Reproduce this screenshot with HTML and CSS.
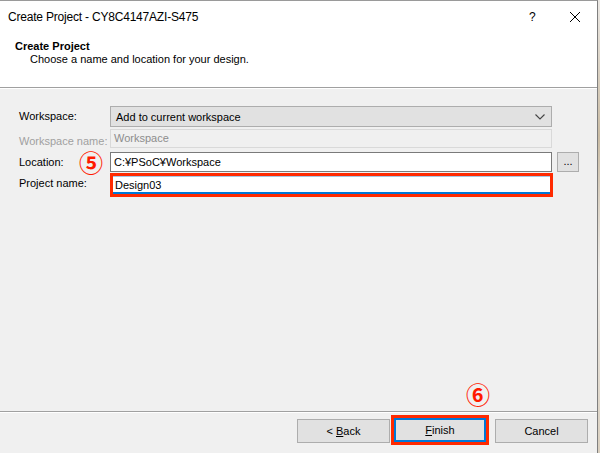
FILE: index.html
```html
<!DOCTYPE html>
<html>
<head>
<meta charset="utf-8">
<link rel="stylesheet" href="styles.css">
</head>
<body>
<div class="screen">
  <div class="window">
    <div class="titlebar">
      <span class="title">Create Project - CY8C4147AZI-S475</span>
      <span class="tb-help">?</span>
      <span class="tb-close"><svg width="12" height="12" viewBox="0 0 12 12"><path d="M1 1L11 11M11 1L1 11" stroke="#000" stroke-width="1" fill="none"/></svg></span>
    </div>
    <div class="header">
      <div class="h-title">Create Project</div>
      <div class="h-sub">Choose a name and location for your design.</div>
    </div>
    <div class="body">
      <div class="form">
        <div class="label">Workspace:</div>
        <div class="combo"><span>Add to current workspace</span>
          <svg width="10" height="6" viewBox="0 0 10 6"><path d="M0.5 0.5L5 5L9.5 0.5" stroke="#444" stroke-width="1.1" fill="none"/></svg>
        </div>
        <div></div>

        <div class="label disabled">Workspace name:</div>
        <div class="field field-disabled">Workspace</div>
        <div></div>

        <div class="label">Location:</div>
        <div class="field field-loc">C:¥PSoC¥Workspace</div>
        <div class="browse">...</div>

        <div class="label">Project name:</div>
        <div class="mark-box"><div class="field field-proj">Design03</div></div>
        <div></div>

        <div class="anno anno5">⑤</div>
      </div>
    </div>
    <div class="footer">
      <div class="btn">&lt; <u>B</u>ack</div>
      <div class="mark-btn"><div class="btn btn-default"><u>F</u>inish</div></div>
      <div class="btn">Cancel</div>
      <div class="anno anno6">⑥</div>
    </div>
  </div>
  <div class="edge"></div>
</div>
</body>
</html>
```

FILE: styles.css
```css
html, body {
  margin: 0;
  padding: 0;
  width: 600px;
  height: 453px;
  overflow: hidden;
  font-family: "Liberation Sans", "Noto Sans CJK JP", sans-serif;
  font-size: 11px;
  color: #000;
}
.screen {
  display: flex;
  width: 600px;
  height: 453px;
}
.window {
  width: 597px;
  height: 452px;
  border-top: 1px solid #9a9a9a;
  border-right: 1px solid #7f7f7f;
  display: flex;
  flex-direction: column;
  background: #f0f0f0;
}
.edge {
  flex: 1;
  background: linear-gradient(#ebe8e4, #c9bba3 30%, #eeebe7 60%, #d9cfbf);
}
.titlebar {
  height: 31px;
  background: #fff;
  display: flex;
  align-items: center;
  padding-left: 8px;
  font-size: 12px;
}
.title { flex: 1; letter-spacing: -0.2px; }
.tb-help { width: 14px; margin-right: 26px; font-size: 12px; }
.tb-close { width: 12px; margin-right: 16px; height: 12px; display: flex; }
.header {
  height: 56px;
  background: #fff;
  border-bottom: 1px solid #a0a0a0;
  padding-left: 15px;
  box-sizing: border-box;
  padding-top: 7px;
}
.h-title { font-weight: bold; font-size: 11px; line-height: 14px; }
.h-sub { padding-left: 15px; line-height: 13px; }
.body {
  flex: 1;
  border-top: 1px solid #fff;
}
.form {
  margin-top: 17px;
  margin-left: 19px;
  display: grid;
  grid-template-columns: 91px 442px 27px;
  grid-template-rows: 23px 23px 21px 24px;
  align-items: start;
  position: relative;
}
.label { line-height: 20px; }
.label.disabled { color: #a0a0a0; line-height: 19px; }
.combo {
  height: 21px;
  box-sizing: border-box;
  border: 1px solid #adadad;
  background: #e1e1e1;
  display: flex;
  align-items: center;
  justify-content: space-between;
  padding: 0 6px 0 5px;
}
.field {
  box-sizing: border-box;
  height: 20px;
  padding-left: 3px;
  line-height: 18px;
  background: #fff;
  border: 1px solid #7a7a7a;
}
.field-disabled {
  height: 19px;
  line-height: 17px;
  background: #f0f0f0;
  border-color: #d9d9d9;
  color: #8d8d8d;
}
.browse {
  margin-left: 5px;
  width: 22px;
  height: 20px;
  box-sizing: border-box;
  border: 1px solid #adadad;
  background: #e1e1e1;
  text-align: center;
  line-height: 16px;
}
.form .label:nth-of-type(1) { line-height: 21px; }
.mark-box {
  border: 3px solid #ff2a00;
  box-sizing: border-box;
  height: 24px;
  width: 443px;
}
.field-proj {
  height: 18px;
  border: none;
  border-top: 1px solid #a6c8e6;
  border-bottom: 2px solid #0078d7;
  line-height: 16px;
  padding-left: 2px;
}
.form .label:nth-of-type(4) { line-height: 24px; }
.anno {
  position: absolute;
  color: #ff1a00;
  font-family: "Noto Sans CJK JP", sans-serif;
  font-weight: bold;
  font-size: 24px;
  line-height: 26px;
}
.anno5 { left: 60px; top: 43px; }
.footer {
  height: 34px;
  border-top: 1px solid #a0a0a0;
  box-shadow: inset 0 1px 0 #fff;
  display: flex;
  align-items: flex-start;
  padding-top: 7px;
  box-sizing: content-box;
  padding-left: 297px;
  position: relative;
}
.btn {
  width: 93px;
  height: 24px;
  box-sizing: border-box;
  border: 1px solid #adadad;
  background: #e1e1e1;
  text-align: center;
  line-height: 22px;
}
.mark-btn {
  margin-left: 1px;
  margin-top: -4px;
  border: 3px solid #ff2a00;
  width: 98px;
  height: 30px;
  box-sizing: border-box;
}
.btn-default {
  width: 92px;
  height: 24px;
  border: 2px solid #0078d7;
  line-height: 20px;
}
.mark-btn + .btn { margin-left: 6px; }
.anno6 { left: 466px; top: -31px; }
```
